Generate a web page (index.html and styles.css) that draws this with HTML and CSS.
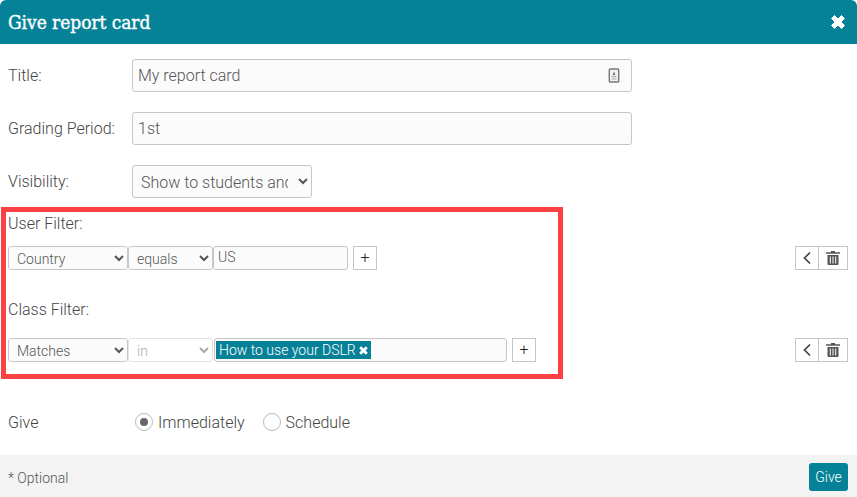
FILE: index.html
```html
<!DOCTYPE html>
<html lang="en">
<head>
<meta charset="utf-8">
<title>Give report card</title>
<link rel="stylesheet" href="styles.css">
</head>
<body>
<div class="modal">
  <header class="head">
    <h1 class="head-title">Give report card</h1>
    <svg class="close" viewBox="0 0 16 16" width="16" height="16"><path d="M1.500 4.500 4.500 1.500 8 5 11.500 1.500 14.500 4.500 11 8 14.500 11.500 11.500 14.500 8 11 4.500 14.500 1.500 11.500 5 8Z" fill="#fff" stroke="#fff" stroke-width="1" stroke-linejoin="round"/></svg>
  </header>
  <main class="body">
    <div class="row">
      <label class="label">Title:</label>
      <div class="title-box">
        <input class="input input-big" type="text" value="My report card">
        <svg class="tag-icon" viewBox="0 0 12 16" width="12" height="15"><rect x="1" y="1" width="10" height="14" rx="1" fill="#f2f2f2" stroke="#777" stroke-width="1.500"/><path d="M6 3.500 7.500 7.500H4.500Z" fill="#777"/><rect x="3.500" y="8.500" width="5" height="1.200" fill="#aaa"/><rect x="3.500" y="11" width="5" height="1.200" fill="#aaa"/></svg>
      </div>
    </div>
    <div class="row">
      <label class="label">Grading Period:</label>
      <input class="input input-big" type="text" value="1st">
    </div>
    <div class="row">
      <label class="label">Visibility:</label>
      <select class="select select-big"><option>Show to students and parents</option></select>
    </div>
    <div class="filter-title first">User Filter:</div>
    <div class="filter-row">
      <select class="select sel-a"><option>Country</option></select>
      <select class="select sel-b"><option>equals</option></select>
      <input class="input input-small" type="text" value="US">
      <button class="plus" type="button">+</button>
      <div class="actions">
        <button class="act act-back" type="button"><svg viewBox="0 0 10 14" width="10" height="14"><path d="M8 1.500 2.500 7 8 12.500" fill="none" stroke="#444" stroke-width="1.700"/></svg></button>
        <button class="act act-trash" type="button"><svg viewBox="0 0 14 14" width="14" height="14"><path d="M5 0h4v1.200h5v1.600H0V1.200H5Z" fill="#555"/><path d="M1.500 4h11V13a1 1 0 0 1-1 1h-9a1 1 0 0 1-1-1Z" fill="#555"/><path d="M4.300 5.500v7M7 5.500v7M9.700 5.500v7" stroke="#fff" stroke-width="1"/></svg></button>
      </div>
    </div>
    <div class="filter-title second">Class Filter:</div>
    <div class="filter-row">
      <select class="select sel-a"><option>Matches</option></select>
      <select class="select sel-b sel-off" disabled><option>in</option></select>
      <div class="tags"><span class="tag">How to use your DSLR <svg viewBox="0 0 10 10" width="11" height="11"><path d="M2 2 8 8M8 2 2 8" stroke="#fff" stroke-width="2.600"/></svg></span></div>
      <button class="plus" type="button">+</button>
      <div class="actions">
        <button class="act act-back" type="button"><svg viewBox="0 0 10 14" width="10" height="14"><path d="M8 1.500 2.500 7 8 12.500" fill="none" stroke="#444" stroke-width="1.700"/></svg></button>
        <button class="act act-trash" type="button"><svg viewBox="0 0 14 14" width="14" height="14"><path d="M5 0h4v1.200h5v1.600H0V1.200H5Z" fill="#555"/><path d="M1.500 4h11V13a1 1 0 0 1-1 1h-9a1 1 0 0 1-1-1Z" fill="#555"/><path d="M4.300 5.500v7M7 5.500v7M9.700 5.500v7" stroke="#fff" stroke-width="1"/></svg></button>
      </div>
    </div>
    <div class="give-row">
      <span class="give-label">Give</span>
      <span class="radio radio-on"></span><span class="radio-text">Immediately</span>
      <span class="radio"></span><span class="radio-text">Schedule</span>
    </div>
  </main>
  <footer class="foot">
    <span class="optional">* Optional</span>
    <button class="give-btn" type="button">Give</button>
  </footer>
  <div class="highlight"></div>
</div>
</body>
</html>
```
FILE: styles.css
```css
* { box-sizing: border-box; }
html, body { margin: 0; padding: 0; }
body {
  width: 857px;
  height: 497px;
  overflow: hidden;
  background: #fff;
  font-family: Roboto, "Liberation Sans", sans-serif;
  font-weight: 300;
  font-size: 16px;
  color: #444;
}
.modal { position: relative; height: 497px; display: flex; flex-direction: column; }
.head {
  height: 44px;
  flex: none;
  background: #068298;
  color: #fff;
  display: flex;
  align-items: center;
  justify-content: space-between;
  padding: 0 11px 0 8px;
  border-radius: 6px 6px 0 0;
}
.head-title { margin: 0; font-family: "DejaVu Serif Condensed", "DejaVu Serif", serif; font-stretch: condensed; font-weight: 400; font-size: 19px; letter-spacing: -0.050px; -webkit-text-stroke: 0.350px #fff; }
.body { flex: 1; padding: 15px 9px 0 8px; }
.row { display: flex; align-items: center; height: 33px; margin-bottom: 20px; }
.label { width: 124px; flex: none; }
.title-box { position: relative; width: 500px; }
.input {
  border: 1px solid #c6c6c6;
  border-radius: 3px;
  background: #fbfbfb;
  color: #555;
  font: 300 16px Roboto, sans-serif;
  outline: none;
}
.input-big { width: 500px; height: 33px; padding: 0 5px; display: block; }
.tag-icon { position: absolute; right: 12px; top: 9px; }
.select {
  border: 1px solid #c6c6c6;
  border-radius: 3px;
  background-color: #fbfbfb;
  color: #555;
  font: 300 14px Roboto, sans-serif;
  outline: none;
}
.select-big { width: 180px; height: 33px; font-size: 16px; padding: 2px 7px 0 4px; }
.filter-title { height: 18px; line-height: 18px; }
.first { margin-top: -3px; }
.second { margin-top: 31px; }
.filter-row { display: flex; align-items: center; height: 24px; margin-top: 13px; }
.second + .filter-row { margin-top: 19px; }
.sel-a { width: 120px; height: 24px; padding: 2px 0 0 4px; }
.sel-b { width: 85px; height: 24px; padding: 2px 0 0 4px; }
.sel-off { color: #aaa; border-color: #e2e2e2; opacity: 1; background-color: #fff; }
.input-small { width: 135px; height: 24px; padding: 0 4px 2px; font-size: 14px; }
.tags {
  width: 293px;
  height: 24px;
  margin-left: 1px;
  border: 1px solid #c6c6c6;
  border-radius: 3px;
  background: #fbfbfb;
  padding: 2px 1px;
  display: flex;
}
.tag {
  background: #068298;
  color: #fff;
  font-weight: 300;
  font-size: 14px;
  line-height: 18px;
  height: 18px;
  padding: 0 2px 0 3px;
  display: flex;
  align-items: center;
  gap: 2px;
  white-space: nowrap;
}
.plus {
  width: 24px;
  height: 24px;
  margin-left: 5px;
  padding: 0 0 2px;
  border: 1px solid #c6c6c6;
  background: #fff;
  color: #222;
  font: 300 16px Roboto, sans-serif;
  flex: none;
}
.actions { margin-left: auto; display: flex; }
.act {
  height: 24px;
  padding: 0;
  border: 1px solid #c6c6c6;
  background: #fff;
  display: flex;
  align-items: center;
  justify-content: center;
}
.act-back { width: 24px; }
.act-trash { width: 30px; margin-left: -1px; }
.give-row { display: flex; align-items: center; height: 20px; margin-top: 50px; }
.give-label { width: 127px; flex: none; }
.radio {
  width: 18px;
  height: 18px;
  border: 1px solid #bbb;
  border-radius: 50%;
  background: #fff;
  flex: none;
  display: flex;
  align-items: center;
  justify-content: center;
}
.radio-on::after { content: ""; width: 8px; height: 8px; border-radius: 50%; background: #666; }
.radio-text { margin-left: 5px; margin-right: 18px; }
.foot {
  height: 42px;
  flex: none;
  background: #f3f3f3;
  display: flex;
  align-items: center;
  justify-content: space-between;
  padding: 8px 9px 6px 8px;
}
.optional { font-size: 14px; padding-top: 2px; color: #555; }
.give-btn {
  width: 39px;
  height: 28px;
  padding: 0;
  border: 0;
  border-radius: 3px;
  background: #068298;
  color: #fff;
  font: 300 14px Roboto, sans-serif;
}
.highlight {
  position: absolute;
  left: 1px;
  top: 207px;
  width: 562px;
  height: 172px;
  border: 5px solid #fb4143;
  pointer-events: none;
}
```
